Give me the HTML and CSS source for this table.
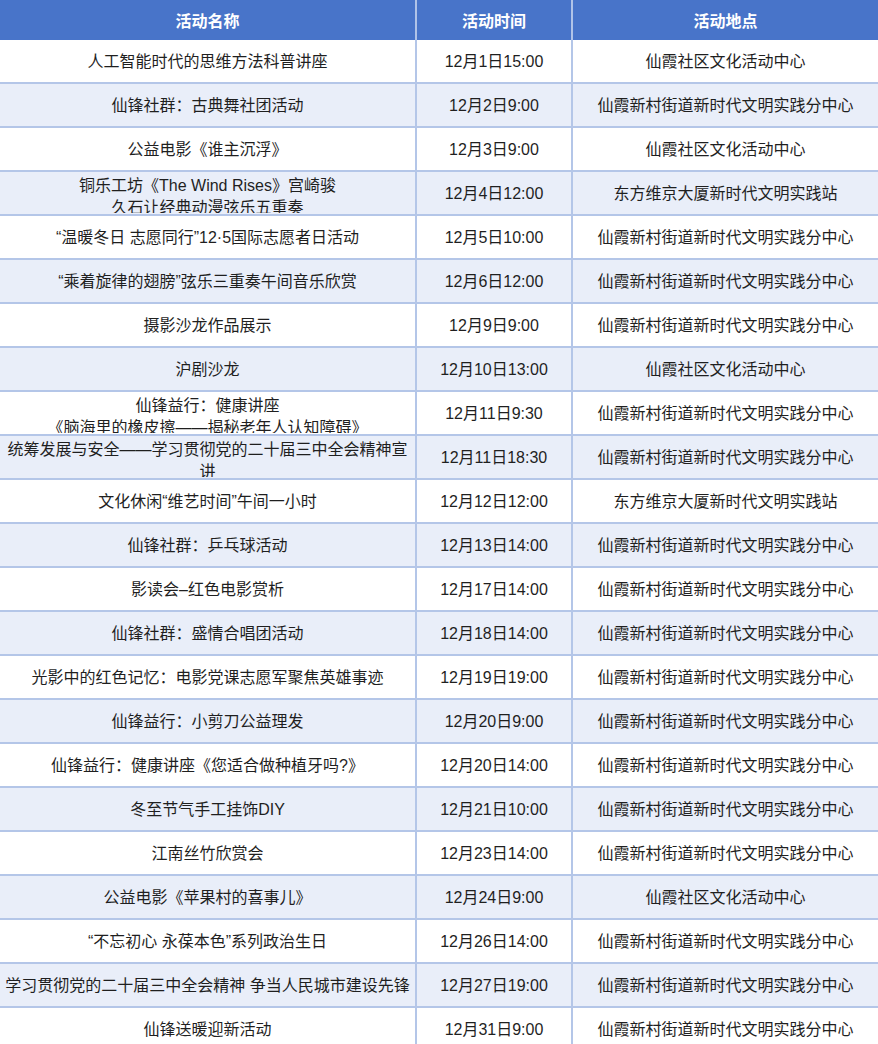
FILE: index.html
```html
<!DOCTYPE html>
<html lang="zh-CN">
<head>
<meta charset="utf-8">
<title>活动安排</title>
<link rel="stylesheet" href="styles.css">
</head>
<body>
<table class="sched">
  <colgroup>
    <col class="c-name">
    <col class="c-time">
    <col class="c-place">
  </colgroup>
  <thead>
    <tr><th>活动名称</th><th>活动时间</th><th>活动地点</th></tr>
  </thead>
  <tbody>
    <tr><td><div class="cell">人工智能时代的思维方法科普讲座</div></td><td><div class="cell">12月1日15:00</div></td><td><div class="cell">仙霞社区文化活动中心</div></td></tr>
    <tr><td><div class="cell">仙锋社群：古典舞社团活动</div></td><td><div class="cell">12月2日9:00</div></td><td><div class="cell">仙霞新村街道新时代文明实践分中心</div></td></tr>
    <tr><td><div class="cell">公益电影《谁主沉浮》</div></td><td><div class="cell">12月3日9:00</div></td><td><div class="cell">仙霞社区文化活动中心</div></td></tr>
    <tr><td><div class="cell">铜乐工坊《The Wind Rises》宫崎骏<br>久石让经典动漫弦乐五重奏</div></td><td><div class="cell">12月4日12:00</div></td><td><div class="cell">东方维京大厦新时代文明实践站</div></td></tr>
    <tr><td><div class="cell">“温暖冬日 志愿同行”12·5国际志愿者日活动</div></td><td><div class="cell">12月5日10:00</div></td><td><div class="cell">仙霞新村街道新时代文明实践分中心</div></td></tr>
    <tr><td><div class="cell">“乘着旋律的翅膀”弦乐三重奏午间音乐欣赏</div></td><td><div class="cell">12月6日12:00</div></td><td><div class="cell">仙霞新村街道新时代文明实践分中心</div></td></tr>
    <tr><td><div class="cell">摄影沙龙作品展示</div></td><td><div class="cell">12月9日9:00</div></td><td><div class="cell">仙霞新村街道新时代文明实践分中心</div></td></tr>
    <tr><td><div class="cell">沪剧沙龙</div></td><td><div class="cell">12月10日13:00</div></td><td><div class="cell">仙霞社区文化活动中心</div></td></tr>
    <tr><td><div class="cell">仙锋益行：健康讲座<br>《脑海里的橡皮擦——揭秘老年人认知障碍》</div></td><td><div class="cell">12月11日9:30</div></td><td><div class="cell">仙霞新村街道新时代文明实践分中心</div></td></tr>
    <tr><td><div class="cell">统筹发展与安全——学习贯彻党的二十届三中全会精神宣讲</div></td><td><div class="cell">12月11日18:30</div></td><td><div class="cell">仙霞新村街道新时代文明实践分中心</div></td></tr>
    <tr><td><div class="cell">文化休闲“维艺时间”午间一小时</div></td><td><div class="cell">12月12日12:00</div></td><td><div class="cell">东方维京大厦新时代文明实践站</div></td></tr>
    <tr><td><div class="cell">仙锋社群：乒乓球活动</div></td><td><div class="cell">12月13日14:00</div></td><td><div class="cell">仙霞新村街道新时代文明实践分中心</div></td></tr>
    <tr><td><div class="cell">影读会–红色电影赏析</div></td><td><div class="cell">12月17日14:00</div></td><td><div class="cell">仙霞新村街道新时代文明实践分中心</div></td></tr>
    <tr><td><div class="cell">仙锋社群：盛情合唱团活动</div></td><td><div class="cell">12月18日14:00</div></td><td><div class="cell">仙霞新村街道新时代文明实践分中心</div></td></tr>
    <tr><td><div class="cell">光影中的红色记忆：电影党课志愿军聚焦英雄事迹</div></td><td><div class="cell">12月19日19:00</div></td><td><div class="cell">仙霞新村街道新时代文明实践分中心</div></td></tr>
    <tr><td><div class="cell">仙锋益行：小剪刀公益理发</div></td><td><div class="cell">12月20日9:00</div></td><td><div class="cell">仙霞新村街道新时代文明实践分中心</div></td></tr>
    <tr><td><div class="cell">仙锋益行：健康讲座《您适合做种植牙吗?》</div></td><td><div class="cell">12月20日14:00</div></td><td><div class="cell">仙霞新村街道新时代文明实践分中心</div></td></tr>
    <tr><td><div class="cell">冬至节气手工挂饰DIY</div></td><td><div class="cell">12月21日10:00</div></td><td><div class="cell">仙霞新村街道新时代文明实践分中心</div></td></tr>
    <tr><td><div class="cell">江南丝竹欣赏会</div></td><td><div class="cell">12月23日14:00</div></td><td><div class="cell">仙霞新村街道新时代文明实践分中心</div></td></tr>
    <tr><td><div class="cell">公益电影《苹果村的喜事儿》</div></td><td><div class="cell">12月24日9:00</div></td><td><div class="cell">仙霞社区文化活动中心</div></td></tr>
    <tr><td><div class="cell">“不忘初心 永葆本色”系列政治生日</div></td><td><div class="cell">12月26日14:00</div></td><td><div class="cell">仙霞新村街道新时代文明实践分中心</div></td></tr>
    <tr><td><div class="cell">学习贯彻党的二十届三中全会精神 争当人民城市建设先锋</div></td><td><div class="cell">12月27日19:00</div></td><td><div class="cell">仙霞新村街道新时代文明实践分中心</div></td></tr>
    <tr><td><div class="cell">仙锋送暖迎新活动</div></td><td><div class="cell">12月31日9:00</div></td><td><div class="cell">仙霞新村街道新时代文明实践分中心</div></td></tr>
  </tbody>
</table>
</body>
</html>
```

FILE: styles.css
```css
html, body {
  margin: 0;
  padding: 0;
  background: #ffffff;
}

body {
  font-family: "Liberation Sans", "Noto Sans CJK SC", sans-serif;
  color: #1f1f1f;
  font-size: 16px;
}

.sched {
  border-collapse: collapse;
  table-layout: fixed;
  width: 878px;
}

.c-name { width: 416px; }
.c-time { width: 156px; }
.c-place { width: 306px; }

.sched th {
  height: 40px;
  padding: 0;
  background: #4874c9;
  color: #ffffff;
  font-weight: bold;
  font-size: 16px;
  text-align: center;
  vertical-align: middle;
  border-left: 2px solid #b0c3e8;
}

.sched th:first-child,
.sched td:first-child {
  border-left: none;
}

.sched td {
  height: 42px;
  padding: 0 4px;
  text-align: center;
  vertical-align: middle;
  border-left: 2px solid #b4c6e8;
  border-bottom: 2px solid #b4c6e8;
}

.sched tbody tr:nth-child(even) td {
  background: #e9eef9;
}

.cell {
  padding-top: 2px;
  max-height: 38px;
  overflow: hidden;
  line-height: 22px;
}
```
